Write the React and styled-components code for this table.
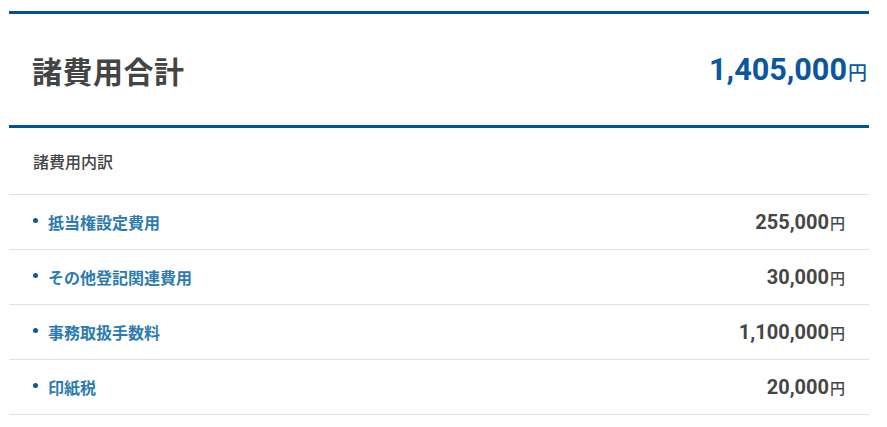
import React from "react";
import styled, { createGlobalStyle } from "styled-components";

const Global = createGlobalStyle`
  html, body { margin: 0; padding: 0; background: #fff; }
  body { font-family: Roboto, "Noto Sans CJK JP", sans-serif; }
`;

const Page = styled.div`
  padding: 11px 18px 0 9px;
`;

const Card = styled.section`
  width: 860px;
`;

const TotalHeader = styled.div`
  display: flex;
  align-items: center;
  justify-content: space-between;
  height: 111px;
  border-top: 3px solid #00539b;
  border-bottom: 3px solid #00539b;
  padding: 0 2px 0 23px;
`;

const Title = styled.h2`
  margin: 0;
  font-size: 30px;
  font-weight: 700;
  color: #444;
  letter-spacing: 0.5px;
`;

const Total = styled.div`
  display: flex;
  align-items: baseline;
  color: #0a57a0;
  font-weight: 700;
`;

const TotalNum = styled.span`
  font-size: 30.6px;
`;

const Yen = styled.span`
  font-size: ${(p) => p.$size}px;
  font-weight: 500;
  margin-left: 1px;
`;

const Label = styled.div`
  display: flex;
  align-items: center;
  padding-left: 24px;
  font-size: 16px;
  font-weight: 500;
  color: #444;
  border-bottom: 1px solid #e0e0e0;
  box-sizing: border-box;
  height: 67px;
`;

const List = styled.ul`
  list-style: none;
  margin: 0;
  padding: 0;
`;

const Row = styled.li`
  display: flex;
  align-items: center;
  justify-content: space-between;
  height: 55px;
  box-sizing: border-box;
  border-bottom: 1px solid #e0e0e0;
  padding: 0 24px 0 24px;
`;

const Name = styled.span`
  display: flex;
  align-items: center;
  font-size: 16px;
  font-weight: 700;
  color: #2c7bb0;
  &::before {
    content: "";
    width: 5px;
    height: 5px;
    border-radius: 50%;
    background: #0a57a0;
    margin-right: 10px;
    margin-bottom: 3px;
  }
`;

const Amount = styled.span`
  display: flex;
  align-items: baseline;
  color: #464646;
  font-weight: 700;
`;

const AmountNum = styled.span`
  font-size: 20px;
`;

const items = [
  ["抵当権設定費用", "255,000"],
  ["その他登記関連費用", "30,000"],
  ["事務取扱手数料", "1,100,000"],
  ["印紙税", "20,000"],
];

export default function App() {
  return (
    <Page>
      <Global />
      <Card>
        <TotalHeader>
          <Title>諸費用合計</Title>
          <Total>
            <TotalNum>1,405,000</TotalNum>
            <Yen $size={19}>円</Yen>
          </Total>
        </TotalHeader>
        <Label>諸費用内訳</Label>
        <List>
          {items.map(([n, a]) => (
            <Row key={n}>
              <Name>{n}</Name>
              <Amount>
                <AmountNum>{a}</AmountNum>
                <Yen $size={15}>円</Yen>
              </Amount>
            </Row>
          ))}
        </List>
      </Card>
    </Page>
  );
}
